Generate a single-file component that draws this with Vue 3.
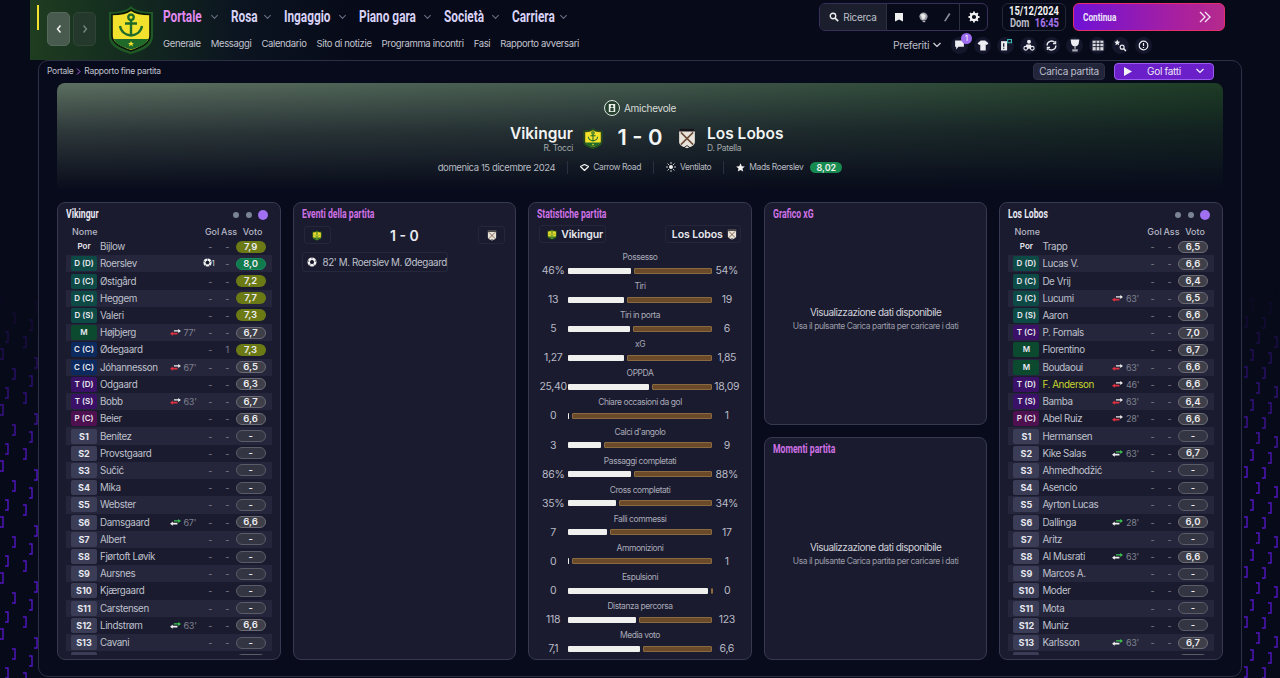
<script setup>
// match report screen: squads either side, stats in the middle
function row(pos, name, rating, extra = {}) {
  return { pos, name, rating, gol: '-', ass: '-', ...extra }
}

function benchRow(i, name, rating = '-', min = null) {
  return row('S' + i, name, rating, min ? { sub: { dir: 'in', min } } : {})
}

const peekRow = { pos: '', name: '', rating: '', gol: '', ass: '', peek: true }

const out = (min) => ({ sub: { dir: 'out', min } })

const home = {
  name: 'Vikingur',
  rows: [
    row('Por', 'Bijlow', '7,9'),
    row('D (D)', 'Roerslev', '8,0', { goal: true }),
    row('D (C)', 'Østigård', '7,2'),
    row('D (C)', 'Heggem', '7,7'),
    row('D (S)', 'Valeri', '7,3'),
    row('M', 'Højbjerg', '6,7', out("77'")),
    row('C (C)', 'Ødegaard', '7,3', { ass: '1' }),
    row('C (C)', 'Jóhannesson', '6,5', out("67'")),
    row('T (D)', 'Odgaard', '6,3'),
    row('T (S)', 'Bobb', '6,7', out("63'")),
    row('P (C)', 'Beier', '6,6'),
    benchRow(1, 'Benítez'),
    benchRow(2, 'Provstgaard'),
    benchRow(3, 'Sučić'),
    benchRow(4, 'Mika'),
    benchRow(5, 'Webster'),
    benchRow(6, 'Damsgaard', '6,6', "67'"),
    benchRow(7, 'Albert'),
    benchRow(8, 'Fjørtoft Løvik'),
    benchRow(9, 'Aursnes'),
    benchRow(10, 'Kjærgaard'),
    benchRow(11, 'Carstensen'),
    benchRow(12, 'Lindstrøm', '6,6', "63'"),
    benchRow(13, 'Cavani'),
    peekRow,
  ],
}

const away = {
  name: 'Los Lobos',
  rows: [
    row('Por', 'Trapp', '6,5'),
    row('D (D)', 'Lucas V.', '6,6'),
    row('D (C)', 'De Vrij', '6,4'),
    row('D (C)', 'Lucumi', '6,5', out("63'")),
    row('D (S)', 'Aaron', '6,6'),
    row('T (C)', 'P. Fornals', '7,0'),
    row('M', 'Florentino', '6,7'),
    row('M', 'Boudaoui', '6,6', out("63'")),
    row('T (D)', 'F. Anderson', '6,6', { ...out("46'"), hot: true }),
    row('T (S)', 'Bamba', '6,4', out("63'")),
    row('P (C)', 'Abel Ruiz', '6,6', out("28'")),
    benchRow(1, 'Hermansen'),
    benchRow(2, 'Kike Salas', '6,7', "63'"),
    benchRow(3, 'Ahmedhodžić'),
    benchRow(4, 'Asencio'),
    benchRow(5, 'Ayrton Lucas'),
    benchRow(6, 'Dallinga', '6,0', "28'"),
    benchRow(7, 'Aritz'),
    benchRow(8, 'Al Musrati', '6,6', "63'"),
    benchRow(9, 'Marcos A.'),
    benchRow(10, 'Moder'),
    benchRow(11, 'Mota'),
    benchRow(12, 'Muniz'),
    benchRow(13, 'Karlsson', '6,7', "63'"),
    peekRow,
  ],
}

function tagClass(pos) {
  if (pos === 'Por') return 'tag-por'
  if (!pos) return 'tag-s'
  return 'tag-' + pos[0].toLowerCase()
}

function pillClass(r) {
  if (r === '-' || !r) return 'pill-empty'
  const v = parseFloat(r.replace(',', '.'))
  if (v >= 8) return 'pill-green'
  if (v >= 7.2) return 'pill-olive'
  return 'pill-grey'
}

// w = white bar in px (track is 144 with a 3px gap)
const stats = [
  ['Possesso', '46%', '54%', 63], ['Tiri', '13', '19', 56], ['Tiri in porta', '5', '6', 62],
  ['xG', '1,27', '1,85', 56], ['OPPDA', '25,40', '18,09', 81], ['Chiare occasioni da gol', '0', '1', 1],
  ["Calci d'angolo", '3', '9', 33], ['Passaggi completati', '86%', '88%', 63],
  ['Cross completati', '35%', '34%', 48], ['Falli commessi', '7', '17', 39], ['Ammonizioni', '0', '1', 1],
  ['Espulsioni', '0', '0', 140], ['Distanza percorsa', '118', '123', 68], ['Media voto', '7,1', '6,6', 72],
].map(([label, left, right, w]) => ({ label, left, right, w }))

const nav = [
  { label: 'Portale', w: 68, active: true },
  { label: 'Rosa', w: 53 },
  { label: 'Ingaggio', w: 75 },
  { label: 'Piano gara', w: 85 },
  { label: 'Società', w: 68 },
  { label: 'Carriera', w: 68 },
]
const subnav = ['Generale', 'Messaggi', 'Calendario', 'Sito di notizie', 'Programma incontri', 'Fasi', 'Rapporto avversari']

// decorative bracket rain in the gutters, fades out towards the top
function rain(baseX, xs, offs, period) {
  const list = []
  for (let y = 240; y < 690; y += period) {
    xs.forEach((x, i) => {
      const top = y + offs[i]
      const o = Math.min(1, Math.max(0, (top - 285) / 180))
      if (o > 0) list.push({ d: `M${baseX + x} ${top}h3v10h-3`, o })
    })
  }
  return list
}
const brackets = [
  ...rain(0, [34, 12, 29, 5, 23, 0], [6, 17, 24, 36, 41, 53], 56),
  ...rain(1243, [7, 25, 1, 19, 13, 31], [10, 13, 27, 28, 43, 47], 50),
]
</script>

<template>
  <div class="page">
    <svg class="rain" width="1280" height="678" aria-hidden="true">
      <path v-for="(b, i) in brackets" :key="i" :d="b.d" :opacity="b.o" fill="none" stroke="#5216c2" stroke-width="1.4" />
    </svg>

    <svg class="sprite" width="0" height="0" aria-hidden="true">
      <symbol id="crest" viewBox="0 0 46 48">
        <path d="M23 0C27 4 33 6 45 6V30C45 41 33 45 23 48C13 45 1 41 1 30V6C13 6 19 4 23 0Z" fill="#1f5a26" />
        <path d="M23 4C27 7 33 8.500 42 8.500V30C42 38 31 42 23 45C15 42 4 38 4 30V8.500C13 8.500 19 7 23 4Z" fill="#f2e22e" stroke="#0b1408" stroke-width="1.600" />
        <path d="M5.500 33H40.500C38 39 30 41.500 23 43.500C16 41.500 8 39 5.500 33Z" fill="#1f6a2a" />
        <path d="M23 8.500a2.800 2.800 0 1 0 .01 0M23 14V29.500M17 17.500H29M12 20C13 26 18 29 23 29.500C28 29 33 26 34 20" fill="none" stroke="#1f6a2a" stroke-width="2.400" />
        <path d="M23 35l1 2h2l-1.600 1.300.6 2-2-1.200-2 1.200.6-2L20 37h2z" fill="#f2e22e" />
      </symbol>
      <symbol id="lobos" viewBox="0 0 20 24">
        <path d="M1 1H19V16C19 20 14 22 10 23C6 22 1 20 1 16Z" fill="#e8e4dc" />
        <path d="M1 1H19V4H1Z" fill="#17151a" />
        <path d="M3 5L17 19M17 5L3 19" stroke="#6a4a34" stroke-width="1.700" />
        <path d="M6 23L10 20 14 23" fill="none" stroke="#17151a" stroke-width="1" />
      </symbol>
      <symbol id="ball" viewBox="0 0 12 12">
        <circle cx="6" cy="6" r="5.400" fill="#f4f4f4" />
        <path d="M6 3.700L8.200 5.300 7.400 7.900H4.600L3.800 5.300Z M6 .6V2 M1 4.500L2.400 5 M11 4.500L9.600 5 M3 10.500L3.800 9 M9 10.500L8.200 9" fill="#15162a" stroke="#15162a" stroke-width="1" />
      </symbol>
      <symbol id="swap" viewBox="0 0 14 9">
        <path d="M5 1.700H10.500V0L14 2.500 10.500 5V3.300H5Z" fill="var(--top)" />
        <path d="M9.500 4.900H3.500V3.200L0 6 3.500 8.800V7.100H9.500Z" fill="var(--bot)" />
      </symbol>
    </svg>

    <header class="topbar">
      <span class="marker"></span>
      <div class="arrows">
        <button class="arrow arrow-on">
          <svg width="8" height="10" viewBox="0 0 8 10"><path d="M5.500 1.500L2.500 5l3 3.500" fill="none" stroke="#f2f2f2" stroke-width="1.500" /></svg>
        </button>
        <button class="arrow">
          <svg width="8" height="10" viewBox="0 0 8 10"><path d="M2.500 1.500L5.500 5l-3 3.500" fill="none" stroke="#7a8a80" stroke-width="1.300" /></svg>
        </button>
      </div>
      <svg class="logo" width="46" height="48"><use href="#crest" /></svg>

      <div class="menus">
        <nav class="nav">
          <a v-for="n in nav" :key="n.label" class="nav-item" :class="{ 'nav-active': n.active }" :style="{ width: n.w + 'px' }">
            <span class="nav-label"><span class="narrow">{{ n.label }}</span></span>
            <i class="chev"></i>
          </a>
        </nav>
        <nav class="subnav">
          <a v-for="s in subnav" :key="s">{{ s }}</a>
        </nav>
      </div>

      <div class="right">
        <div class="right-top">
          <div class="tools">
            <div class="search">
              <svg width="10" height="10" viewBox="0 0 12 12"><circle cx="4.800" cy="4.800" r="3.300" fill="none" stroke="#eee" stroke-width="1.600" /><path d="M7.300 7.300L11 11" stroke="#eee" stroke-width="2" /></svg>
              Ricerca
            </div>
            <div class="tool-group">
              <svg width="10" height="10" viewBox="0 0 10 10"><path d="M1 1H9V9.500L5 7.500 1 9.500Z" fill="#f0f0f0" /></svg>
              <svg width="11" height="11" viewBox="0 0 12 12"><circle cx="6" cy="5" r="4.500" fill="#9a9ca6" /><path d="M3 3L6 2 8 4 7 7 5 8 4 5ZM5 10.500H8" fill="#eee" stroke="#ddd" /></svg>
              <svg width="10" height="10" viewBox="0 0 10 10"><path d="M7 1L8.500 2 3.500 9.500 2 9Z" fill="#8a8c96" /></svg>
            </div>
            <div class="tool-gear">
              <svg width="12" height="12" viewBox="0 0 12 12"><circle cx="6" cy="6" r="3.200" fill="none" stroke="#f2f2f2" stroke-width="2.200" /><path d="M6 .5V2.500M6 9.500V11.500M.5 6H2.500M9.500 6H11.500M2.100 2.100L3.500 3.500M8.500 8.500L9.900 9.900M2.100 9.900L3.500 8.500M8.500 3.500L9.900 2.100" stroke="#f2f2f2" stroke-width="1.800" /></svg>
            </div>
          </div>
          <span class="vline"></span>
          <div class="clock">
            <span class="clock-line">15/12/2024</span>
            <span class="clock-line"><span class="dow">Dom</span><span class="time">16:45</span></span>
          </div>
          <button class="continue">
            <span class="narrow">Continua</span>
            <svg width="12" height="12" viewBox="0 0 12 12"><path d="M1 1L6 6 1 11M6 1L11 6 6 11" fill="none" stroke="#f4e6f6" stroke-width="1.300" /></svg>
          </button>
        </div>
        <div class="right-bottom">
          <span class="fav">Preferiti</span>
          <svg class="fav-chev" width="8" height="6" viewBox="0 0 8 6"><path d="M.5 1L4 4.500 7.500 1" fill="none" stroke="#d6d6dc" stroke-width="1.200" /></svg>
          <span class="circle circle-badge">
            <svg width="11" height="10" viewBox="0 0 10 9"><path d="M1 .5H9V6H4L2 8.500V6H1Z" fill="#ececf2" /></svg>
            <em>1</em>
          </span>
          <span class="circle"><svg width="12" height="11" viewBox="0 0 11 10"><path d="M3.500 .5H7.500L10.500 3 9 4.500 8 4V9.500H3V4L2 4.500.5 3Z" fill="#ececf2" /></svg></span>
          <span class="circle"><svg width="12" height="12" viewBox="0 0 11 11"><path d="M1 2H6.500V10.500H1Z" fill="#ececf2" /><path d="M3.400 4V7M3.400 8V9" stroke="#1a1c30" stroke-width="1.200" /><path d="M7 .5H10.500V3.500H7Z" fill="none" stroke="#39b8b0" stroke-width="1" /></svg></span>
          <span class="circle"><svg width="12" height="12" viewBox="0 0 11 11"><circle cx="5.500" cy="2.500" r="1.800" fill="#ececf2" /><path d="M3 5H7L9 9H2Z" fill="#ececf2" /><circle cx="2.500" cy="8.500" r="1.700" fill="#14172b" stroke="#ececf2" /><circle cx="8.500" cy="8.500" r="1.700" fill="#14172b" stroke="#ececf2" /></svg></span>
          <span class="circle"><svg width="11" height="11" viewBox="0 0 10 10"><path d="M1 5A4 4 0 0 1 8 2.300M9 5A4 4 0 0 1 2 7.700" fill="none" stroke="#ececf2" stroke-width="1.200" /><path d="M8.800 .8V3.300H6.300M1.200 9.200V6.700H3.700" fill="none" stroke="#ececf2" stroke-width="1" /></svg></span>
          <span class="circle"><svg width="12" height="13" viewBox="0 0 11 12"><path d="M1.500 .5H9.500L9 4C8.600 6 7 7 5.500 7S2.400 6 2 4Z" fill="#ececf2" /><path d="M4.800 7H6.200V9H4.800ZM3 9.500H8V11.500H3Z" fill="#a8aab4" /></svg></span>
          <span class="circle"><svg width="12" height="12" viewBox="0 0 11 11"><path d="M.5 1.500H10.500V10.500H.5Z" fill="#d8d8de" /><path d="M.5 4H10.500M.5 7H10.500M3.800 1.500V10.500M7.200 1.500V10.500" stroke="#14172b" stroke-width=".8" /></svg></span>
          <span class="circle"><svg width="13" height="13" viewBox="0 0 12 12"><path d="M3 .5L3.800 2.400 5.700 2.600 4.300 3.900 4.700 5.800 3 4.800 1.300 5.800 1.700 3.900.3 2.600 2.200 2.400Z" fill="#ececf2" /><circle cx="7.500" cy="7.500" r="1.800" fill="none" stroke="#ececf2" stroke-width="1.100" /><path d="M8.800 8.800L11 11" stroke="#ececf2" stroke-width="1.400" /></svg></span>
          <span class="circle"><svg width="11" height="11" viewBox="0 0 11 11"><circle cx="5.500" cy="5.500" r="4.300" fill="none" stroke="#ececf2" stroke-width="1.200" /><path d="M5.500 3V6M5.500 7V8" stroke="#ececf2" stroke-width="1.200" /></svg></span>
        </div>
      </div>
    </header>

    <main class="frame">
      <div class="crumbs">
        <div class="trail">Portale <svg width="5" height="7" viewBox="0 0 5 7"><path d="M1 .5L4 3.500 1 6.500" fill="none" stroke="#b06ae8" stroke-width="1" /></svg> Rapporto fine partita</div>
        <div class="crumb-actions">
          <button class="load">Carica partita</button>
          <button class="goals">
            <svg width="8" height="9" viewBox="0 0 8 9"><path d="M0 0L8 4.500 0 9Z" fill="#f4f4f4" /></svg>
            <span>Gol fatti</span>
            <svg width="8" height="6" viewBox="0 0 8 6"><path d="M.5 1L4 4.500 7.500 1" fill="none" stroke="#f4f4f4" stroke-width="1.200" /></svg>
          </button>
        </div>
      </div>

      <section class="hero">
        <div class="comp">
          <span class="comp-badge"><svg width="8" height="10" viewBox="0 0 10 12"><path d="M1 1H9V11H1Z" fill="#e8eee8" /><circle cx="5" cy="3.800" r="1.500" fill="#26402f" /><path d="M3 6H7V10H3Z" fill="#26402f" /></svg></span>
          Amichevole
        </div>
        <div class="score-line">
          <div class="side side-home"><strong>Vikingur</strong><small>R. Tocci</small></div>
          <svg class="hero-crest" width="20" height="21"><use href="#crest" /></svg>
          <div class="score">1 - 0</div>
          <svg class="hero-crest" width="20" height="21"><use href="#lobos" /></svg>
          <div class="side side-away"><strong>Los Lobos</strong><small>D. Patella</small></div>
        </div>
        <div class="meta">
          <span class="meta-date">domenica 15 dicembre 2024</span>
          <i class="meta-sep"></i>
          <span><svg width="9" height="7" viewBox="0 0 9 7"><path d="M.5 2.500L4.500 .5 8.500 2.500 4.500 6.500Z" fill="none" stroke="#eee" stroke-width="1.300" /></svg>Carrow Road</span>
          <i class="meta-sep"></i>
          <span><svg width="10" height="10" viewBox="0 0 10 10"><circle cx="5" cy="5" r="2" fill="#eee" /><path d="M5 0V2M5 8V10M0 5H2M8 5H10M1.500 1.500L3 3M7 7L8.500 8.500M1.500 8.500L3 7M7 3L8.500 1.500" stroke="#eee" stroke-width=".8" /></svg>Ventilato</span>
          <i class="meta-sep"></i>
          <span><svg width="9" height="9" viewBox="0 0 10 10"><path d="M5 .3L6.400 3.500 9.800 3.800 7.200 6.100 8 9.500 5 7.700 2 9.500 2.800 6.100.2 3.800 3.600 3.500Z" fill="#f4f4f4" /></svg>Mads Roerslev</span>
          <b class="mom">8,02</b>
        </div>
      </section>

      <section class="panels">
        <article class="panel">
          <div class="panel-head">
            <h3 class="title title-white">{{ home.name }}</h3>
            <div class="dots"><i></i><i></i><i class="dot-on"></i></div>
          </div>
          <div class="table">
            <div class="thead"><span class="th-name">Nome</span><span class="col-n">Gol</span><span class="col-n">Ass</span><span class="col-v">Voto</span></div>
            <div class="tbody">
              <div v-for="r in home.rows" :key="r.pos" class="tr">
                <span class="tag" :class="tagClass(r.pos)">{{ r.pos }}</span>
                <span class="name">{{ r.name }}</span>
                <span v-if="r.sub" class="sub" :class="'sub-' + r.sub.dir"><svg width="11" height="7"><use href="#swap" /></svg>{{ r.sub.min }}</span>
                <span class="col-n cell"><span v-if="r.goal" class="goal"><svg width="9" height="9"><use href="#ball" /></svg><sub>1</sub></span><template v-else>{{ r.gol }}</template></span>
                <span class="col-n cell">{{ r.ass }}</span>
                <span class="col-v"><b class="pill" :class="pillClass(r.rating)">{{ r.rating }}</b></span>
              </div>
            </div>
          </div>
        </article>

        <article class="panel">
          <h3 class="title">Eventi della partita</h3>
          <div class="ev-head">
            <span class="ev-chip"><svg width="10" height="11"><use href="#crest" /></svg></span>
            <strong>1 - 0</strong>
            <span class="ev-chip"><svg width="10" height="11"><use href="#lobos" /></svg></span>
          </div>
          <div class="event"><svg width="10" height="10"><use href="#ball" /></svg>82' M. Roerslev M. Ødegaard</div>
        </article>

        <article class="panel">
          <h3 class="title">Statistiche partita</h3>
          <div class="st-head">
            <span class="st-chip st-chip-home"><svg width="10" height="11"><use href="#crest" /></svg>Vikingur</span>
            <span class="st-chip st-chip-away">Los Lobos<svg width="10" height="11"><use href="#lobos" /></svg></span>
          </div>
          <div class="st-list">
            <div v-for="s in stats" :key="s.label" class="st">
              <div class="st-label">{{ s.label }}</div>
              <div class="st-row">
                <span class="st-val">{{ s.left }}</span>
                <div class="bars">
                  <i class="bar-a" :style="{ width: s.w + 'px' }"></i>
                  <i class="bar-b"></i>
                </div>
                <span class="st-val">{{ s.right }}</span>
              </div>
            </div>
          </div>
        </article>

        <div class="stack">
          <article class="panel">
            <h3 class="title">Grafico xG</h3>
            <div class="empty"><p>Visualizzazione dati disponibile</p><small>Usa il pulsante Carica partita per caricare i dati</small></div>
          </article>
          <article class="panel">
            <h3 class="title">Momenti partita</h3>
            <div class="empty"><p>Visualizzazione dati disponibile</p><small>Usa il pulsante Carica partita per caricare i dati</small></div>
          </article>
        </div>

        <article class="panel">
          <div class="panel-head">
            <h3 class="title title-white">{{ away.name }}</h3>
            <div class="dots"><i></i><i></i><i class="dot-on"></i></div>
          </div>
          <div class="table">
            <div class="thead"><span class="th-name">Nome</span><span class="col-n">Gol</span><span class="col-n">Ass</span><span class="col-v">Voto</span></div>
            <div class="tbody">
              <div v-for="r in away.rows" :key="r.pos" class="tr">
                <span class="tag" :class="tagClass(r.pos)">{{ r.pos }}</span>
                <span class="name" :class="{ hot: r.hot }">{{ r.name }}</span>
                <span v-if="r.sub" class="sub" :class="'sub-' + r.sub.dir"><svg width="11" height="7"><use href="#swap" /></svg>{{ r.sub.min }}</span>
                <span class="col-n cell">{{ r.gol }}</span>
                <span class="col-n cell">{{ r.ass }}</span>
                <span class="col-v"><b class="pill" :class="pillClass(r.rating)">{{ r.rating }}</b></span>
              </div>
            </div>
          </div>
        </article>
      </section>
    </main>
  </div>
</template>

<style>
html, body { margin: 0; background: #070a18; }
</style>

<style scoped>
.page {
  position: relative;
  width: 1280px;
  height: 678px;
  overflow: hidden;
  background: #070a18;
  color: #d8d9e2;
  font-family: Inter, "Liberation Sans", sans-serif;
  font-size: 10px;
  letter-spacing: -0.3px;
}
.rain { position: absolute; left: 0; top: 0; }
.sprite { position: absolute; }
button { font: inherit; letter-spacing: inherit; color: inherit; cursor: pointer; }
svg { flex: none; }

/* the display face in the reference is very condensed, so squeeze Roboto */
.narrow {
  display: inline-block;
  white-space: nowrap;
  font-family: Roboto, "Liberation Sans", sans-serif;
  font-weight: 700;
  letter-spacing: 0;
  transform: scaleX(.74);
  transform-origin: left center;
}

/* top bar */
.topbar {
  position: relative;
  display: flex;
  height: 60px;
  margin-left: 30px;
  padding-left: 17px;
  background: linear-gradient(90deg, #1f3d20 0, #16301f 70px, #0b1420 210px, #070a18 330px);
}
.marker { position: absolute; left: 7px; top: 5px; width: 2px; height: 25px; background: #f2e22e; }
.arrows { display: flex; gap: 3px; margin-top: 12px; height: 34px; }
.arrow { width: 23px; height: 34px; border: 1px solid #2f4436; border-radius: 5px; background: #24382c; padding: 0; display: flex; align-items: center; justify-content: center; }
.arrow-on { background: #48594e; border-color: #56685b; }
.logo { margin: 6px 0 0 12px; }
.menus { margin-left: 9px; }
.nav { display: flex; height: 32px; align-items: center; }
.nav-item { display: flex; align-items: center; flex: none; font-size: 16px; color: #d8d2f6; }
.nav-active { color: #e08af0; }
.nav-label { flex: 1; min-width: 0; }
.chev { flex: none; width: 4px; height: 4px; margin: -2px 14px 0 0; border-right: 1px solid #6f7288; border-bottom: 1px solid #6f7288; transform: rotate(45deg); }
.subnav { display: flex; gap: 10px; margin-top: 6px; color: #c3c4d0; font-size: 9.500px; letter-spacing: -.35px; }

.right { margin-left: auto; width: 407px; margin-right: 55px; }
.right-top { display: flex; align-items: center; padding-top: 3px; height: 28px; }
.tools { flex: none; display: flex; height: 26px; margin-left: 1px; border: 1.500px solid #373058; border-radius: 6px; width: 167px; }
.search { display: flex; align-items: center; justify-content: center; gap: 4px; width: 66px; background: #1b1e2d; color: #bfc1ca; font-size: 10px; border-right: 1px solid #2e3040; border-radius: 5px 0 0 5px; }
.tool-group { display: flex; align-items: center; justify-content: space-between; padding: 0 7px; width: 58px; border-right: 1px solid #2e3040; }
.tool-gear { flex: 1; display: flex; align-items: center; justify-content: center; }
.vline { width: 1px; height: 16px; background: #23263a; margin: 0 7px; }
.clock { flex: none; width: 62px; height: 26px; border: 1.500px solid #23273a; border-radius: 6px; display: flex; flex-direction: column; align-items: center; justify-content: center; margin-right: 7px; color: #f1f1f1; }
.clock-line { display: flex; gap: 7px; white-space: nowrap; font-family: Roboto, "Liberation Sans", sans-serif; font-weight: 700; font-size: 12px; line-height: 12px; letter-spacing: 0; transform: scaleX(.78); }
.dow { color: #b9bac4; }
.time { color: #a774ec; }
.continue { flex: none; display: flex; align-items: center; justify-content: space-between; width: 152px; height: 28px; box-sizing: border-box; border: 1.500px solid #e52f6c; border-radius: 6px; padding: 0 13px 0 9px; background: linear-gradient(90deg, #6f12d6, #a9209f 70%, #b52a8c); color: #eee6fa; font-size: 11.500px; }
.continue .narrow { transform: scaleX(.72); }
.right-bottom { display: flex; align-items: center; margin-top: 5px; height: 18px; color: #b9bac6; }
.fav { margin-left: 75px; font-size: 10.500px; width: 40px; }
.fav-chev { margin: 0 10px 0 0; }
.circle { position: relative; flex: none; display: flex; align-items: center; justify-content: center; width: 17px; height: 17px; border-radius: 50%; background: #14172b; margin-right: 6px; }
.circle-badge em { position: absolute; right: -4px; top: -4px; width: 11px; height: 11px; border-radius: 50%; background: #9d6cf0; color: #fff; font-style: normal; font-size: 7.500px; line-height: 11px; text-align: center; }

/* frame */
.frame {
  position: relative;
  box-sizing: border-box;
  width: 1204px;
  height: 617px;
  margin-left: 38px;
  padding: 0 18px;
  border: 1px solid #2d3044;
  border-radius: 10px;
  background: #080b1b;
}
.crumbs { display: flex; align-items: center; box-sizing: border-box; height: 22px; padding-bottom: 2px; }
.trail { font-size: 8.500px; color: #c0c2ce; display: flex; gap: 3px; align-items: center; margin-left: -10px; }
.crumb-actions { margin-left: auto; display: flex; gap: 9px; margin-right: 9px; }
.load { width: 72px; height: 17px; padding: 0; background: #23263a; border: 1px solid #2d3044; border-radius: 4px; color: #bcbecb; font-size: 10px; }
.goals { display: flex; align-items: center; justify-content: space-between; width: 100px; height: 17px; padding: 0 9px; background: #6a1fc8; border: 1px solid #9a5cf0; border-radius: 4px; color: #ede6f8; font-size: 10px; }

.hero {
  height: 107px;
  border-radius: 8px 8px 0 0;
  background:
    linear-gradient(180deg, rgba(8, 11, 27, 0) 0, rgba(8, 11, 27, .55) 45%, #080b1b 100%),
    linear-gradient(90deg, #5c6f60, #41574b 50%, #1d3c25);
  display: flex;
  flex-direction: column;
  align-items: center;
  padding-top: 16px;
  box-sizing: border-box;
}
.comp { display: flex; align-items: center; gap: 4px; font-size: 10px; color: #d8dcd8; height: 17px; }
.comp-badge { width: 16px; height: 16px; border-radius: 50%; background: #26402f; border: 1px solid #dfe6df; box-sizing: border-box; display: flex; align-items: center; justify-content: center; }
.score-line { display: flex; align-items: flex-start; height: 34px; margin-top: 8px; }
.side { width: 130px; display: flex; flex-direction: column; }
.side strong { font-size: 15.500px; line-height: 19px; color: #f2f4f2; font-weight: 600; letter-spacing: 0; }
.side small { font-size: 8.500px; line-height: 11px; color: #a2a8ac; }
.side-home { text-align: right; margin-right: 10px; }
.side-away { margin-left: 10px; }
.hero-crest { margin-top: 4px; }
.score { width: 74px; text-align: center; font-size: 22px; line-height: 26px; font-weight: 600; color: #f4f4f4; letter-spacing: 0; }
.meta { display: flex; align-items: center; height: 14px; margin-top: 2px; font-size: 8.500px; letter-spacing: -.4px; color: #b6bac0; }
.meta > span { display: flex; align-items: center; gap: 4px; }
.meta-date { font-size: 9.500px; }
.meta-sep { width: 1px; height: 13px; background: #2a3040; margin: 0 12px; }
.mom { margin-left: 7px; width: 32px; height: 11px; line-height: 11px; border-radius: 6px; background: #178a50; color: #f0f0f0; text-align: center; font-size: 9px; font-weight: 600; letter-spacing: 0; }

/* panels */
.panels { display: grid; grid-template-columns: repeat(5, 1fr); gap: 12px; height: 458px; margin-top: 12px; }
.stack { display: flex; flex-direction: column; gap: 12px; min-height: 0; }
.panel { flex: 1; box-sizing: border-box; min-width: 0; padding: 5px 8px 4px; background: #1a1b2e; border: 1px solid #363950; border-radius: 8px; overflow: hidden; display: flex; flex-direction: column; }
.panel-head { display: flex; align-items: center; justify-content: space-between; }
.title { margin: 0; height: 13px; line-height: 13px; white-space: nowrap; font-family: Roboto, "Liberation Sans", sans-serif; font-size: 12px; font-weight: 700; letter-spacing: 0; color: #cf72e6; transform: scaleX(.72); transform-origin: left center; }
.title-white { color: #e8e8f2; }
.dots { display: flex; align-items: center; gap: 7px; margin-right: 4px; }
.dots i { width: 6px; height: 6px; border-radius: 50%; background: #7a8494; }
.dots .dot-on { width: 10px; height: 10px; background: #a070f0; margin-left: -1px; }

.table { margin-top: 4px; }
.thead { display: flex; align-items: center; height: 13px; color: #b5b6c4; font-size: 9px; font-weight: 500; padding: 0 4px 0 6px; letter-spacing: 0; }
.th-name { flex: 1; }
.col-n { flex: none; width: 17px; text-align: center; }
.col-v { flex: none; width: 30px; text-align: center; display: flex; justify-content: center; }
.tbody { height: 417px; overflow: hidden; }
.tr { display: flex; align-items: center; height: 17.230px; padding: 0 6px 0 5px; }
.tr:nth-child(even) { background: #25263b; }
.tag { flex: none; width: 26px; height: 15px; line-height: 15px; border-radius: 2px; text-align: center; font-size: 8px; font-weight: 600; color: #e8e8f0; letter-spacing: 0; }
.tag-por { background: transparent; }
.tag-d { background: #0e4a45; }
.tag-m { background: #0c4a30; }
.tag-c { background: #0d2a5e; }
.tag-t { background: #3a1166; }
.tag-p { background: #4f1050; }
.tag-s { background: #3a3d55; font-size: 9px; font-weight: 700; }
.name { flex: 1; margin-left: 3px; font-size: 9.800px; letter-spacing: -.4px; color: #bfc0cc; white-space: nowrap; overflow: hidden; }
.hot { color: #c8d62e; }
.sub { flex: none; display: flex; align-items: center; gap: 3px; width: 30px; margin-right: 2px; font-size: 9px; color: #80828f; }
.sub-out svg { --top: #f0f0f0; --bot: #e03040; }
.sub-in svg { --top: #3cc850; --bot: #f0f0f0; }
.cell { color: #7f8190; font-size: 9px; }
.goal { display: inline-flex; align-items: flex-end; margin-left: -3px; }
.goal sub { font-size: 7px; line-height: 7px; color: #e8e8e8; vertical-align: baseline; }
.pill { width: 30px; height: 12px; box-sizing: border-box; line-height: 10px; border-radius: 6.500px; border: 1px solid transparent; text-align: center; font-size: 9.500px; font-weight: 600; letter-spacing: 0; color: #ececf0; }
.pill-olive { background: #6b7a15; }
.pill-green { background: #0f7a4c; border-color: #1a8a5a; }
.pill-grey { background: #3e3f48; border-color: #6a6b74; }
.pill-empty { background: #333542; border-color: #5a5c68; }

.ev-head { display: flex; align-items: center; justify-content: space-between; margin: 5px 2px 0; height: 18px; }
.ev-head strong { font-size: 14px; font-weight: 600; color: #ececf0; letter-spacing: 0; }
.ev-chip { width: 27px; height: 18px; box-sizing: border-box; border: 1px solid #24263a; border-radius: 3px; display: flex; align-items: center; justify-content: center; }
.event { display: flex; align-items: center; gap: 6px; width: 146px; box-sizing: border-box; height: 20px; margin-top: 8px; padding-left: 4px; border: 1px solid #25283c; border-radius: 3px; font-size: 9.800px; letter-spacing: -.4px; color: #bfc0cc; white-space: nowrap; }

.st-head { display: flex; justify-content: space-between; margin: 4px 2px 0; }
.st-chip { display: flex; align-items: center; gap: 4px; height: 18px; box-sizing: border-box; padding: 0 6px; border: 1px solid #24263a; border-radius: 3px; font-size: 10.500px; letter-spacing: -.1px; font-weight: 600; color: #e8e8ee; white-space: nowrap; }
.st-chip-home { width: 67px; padding-left: 7px; }
.st-chip-away { width: 76px; justify-content: space-between; }
.st-list { margin-top: 6px; }
.st { height: 29.100px; }
.st-label { height: 12px; line-height: 12px; padding-top: 2px; text-align: center; font-size: 8.500px; letter-spacing: -.45px; color: #a9aab8; }
.st-row { display: flex; align-items: center; height: 15px; margin: 0 1px; font-size: 10.500px; letter-spacing: -.3px; color: #b9bac6; }
.st-val { flex: none; width: 30px; text-align: center; }
.bars { display: flex; gap: 3px; width: 144px; }
.bars i { height: 6px; display: block; border-radius: 1px; box-sizing: border-box; }
.bar-a { background: #f0f0ee; flex: none; }
.bar-b { flex: 1; background: #6b4a2a; border: 1px solid #8a6a40; min-width: 1px; }

.empty { flex: 1; display: flex; flex-direction: column; align-items: center; justify-content: center; padding-bottom: 4px; }
.empty p { margin: 0; font-size: 10px; letter-spacing: -.5px; color: #d0d1da; }
.empty small { margin-top: 3px; font-size: 8.500px; letter-spacing: -.45px; color: #9a9ba8; }
</style>
